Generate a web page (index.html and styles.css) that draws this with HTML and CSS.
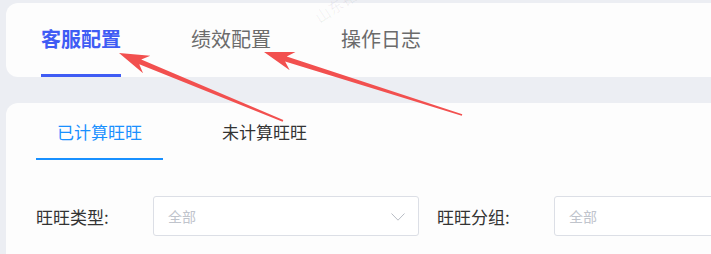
FILE: index.html
```html
<!DOCTYPE html>
<html lang="zh-CN">
<head>
<meta charset="utf-8">
<title>配置</title>
<link rel="stylesheet" href="styles.css">
</head>
<body>
<div class="page">
  <div class="top-card">
    <div class="top-tab active">客服配置</div>
    <div class="top-tab">绩效配置</div>
    <div class="top-tab">操作日志</div>
  </div>
  <div class="sub-card">
    <div class="sub-tabs">
      <div class="sub-tab active">已计算旺旺</div>
      <div class="sub-tab">未计算旺旺</div>
    </div>
    <div class="filters">
      <div class="label">旺旺类型:</div>
      <div class="select">
        <span>全部</span>
        <svg class="chevron" width="14" height="8" viewBox="0 0 14 8"><path d="M0.5 0.5 L7 7.2 L13.5 0.5" fill="none" stroke="#b8bcc4" stroke-width="1"/></svg>
      </div>
      <div class="label">旺旺分组:</div>
      <div class="select">
        <span>全部</span>
      </div>
    </div>
  </div>
  <div class="watermark">山东铭远</div>
  <svg class="arrows" width="711" height="254" viewBox="0 0 711 254">
    <g transform="translate(119,53) rotate(22.5)">
      <polygon points="0,0 30,-9.5 23,-2.6 177.5,-0.9 177.5,0.9 23,2.6 30,9.5" fill="#f2504f"/>
    </g>
    <g transform="translate(264,52) rotate(17.65)">
      <polygon points="0,0 30,-9.5 23,-2.6 207.8,-0.9 207.8,0.9 23,2.6 30,9.5" fill="#f2504f"/>
    </g>
  </svg>
</div>
</body>
</html>
```
FILE: styles.css
```css
html, body {
  margin: 0;
  padding: 0;
  background: #eceef3;
  overflow: hidden;
  font-family: "Noto Sans CJK SC", "Noto Sans", sans-serif;
}
.page {
  position: relative;
  width: 711px;
  height: 254px;
  padding: 3px 0 0 6px;
  box-sizing: border-box;
}
.top-card {
  height: 74px;
  background: #fdfdfd;
  border-radius: 12px 0 0 12px;
  display: flex;
  padding-left: 35px;
  gap: 70px;
}
.top-tab {
  height: 74px;
  box-sizing: border-box;
  display: flex;
  align-items: center;
  font-size: 20px;
  line-height: 20px;
  color: #6b6b6b;
  border-bottom: 3px solid transparent;
}
.top-tab.active {
  color: #3f5cf4;
  font-weight: bold;
  border-bottom-color: #3f5cf4;
}
.sub-card {
  margin-top: 26px;
  background: #fdfdfd;
  border-radius: 12px 0 0 0;
  padding-left: 30px;
  height: 160px;
}
.sub-tabs {
  display: flex;
  gap: 38px;
}
.sub-tab {
  height: 57px;
  box-sizing: border-box;
  padding: 2px 21px 0;
  display: flex;
  align-items: center;
  font-size: 17px;
  line-height: 17px;
  color: #333;
  border-bottom: 2px solid transparent;
}
.sub-tab.active {
  color: #1890ff;
  border-bottom-color: #1890ff;
}
.filters {
  margin-top: 36px;
  display: flex;
  align-items: center;
}
.label {
  width: 117px;
  flex: none;
  font-size: 17px;
  color: #333;
}
.select {
  width: 266px;
  height: 40px;
  flex: none;
  box-sizing: border-box;
  border: 1px solid #dcdfe6;
  border-radius: 3px;
  padding: 0 13px 0 14px;
  display: flex;
  align-items: center;
  justify-content: space-between;
  font-size: 14px;
  color: #c0c4cc;
  margin-right: 18px;
  background: #fff;
}
.chevron {
  display: block;
  margin-top: 2px;
}
.watermark {
  position: absolute;
  left: 322px;
  top: 6px;
  font-size: 15px;
  color: rgba(0, 0, 0, 0.06);
  transform: rotate(-33deg);
  transform-origin: left bottom;
  white-space: nowrap;
}
.arrows {
  position: absolute;
  left: 0;
  top: 0;
  pointer-events: none;
}
```
